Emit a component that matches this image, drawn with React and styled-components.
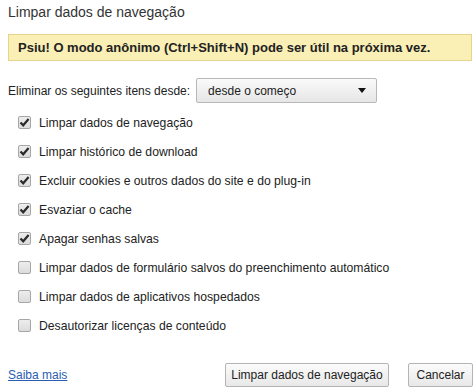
import React from "react";
import { useState } from "react";
import styled, { createGlobalStyle } from "styled-components";

const GlobalStyle = createGlobalStyle`
  body {
    margin: 0;
    background: #ffffff;
    font-family: "Liberation Sans", "DejaVu Sans", sans-serif;
    color: #222;
  }
`;

const items = [
  { label: "Limpar dados de navegação", checked: true },
  { label: "Limpar histórico de download", checked: true },
  { label: "Excluir cookies e outros dados do site e do plug-in", checked: true },
  { label: "Esvaziar o cache", checked: true },
  { label: "Apagar senhas salvas", checked: true },
  { label: "Limpar dados de formulário salvos do preenchimento automático", checked: false },
  { label: "Limpar dados de aplicativos hospedados", checked: false },
  { label: "Desautorizar licenças de conteúdo", checked: false },
];

function App() {
  const [state, setState] = useState(items.map((i) => i.checked));

  const toggle = (idx) => {
    setState(state.map((v, i) => (i === idx ? !v : v)));
  };

  return (
    <Dialog>
      <GlobalStyle />
      <Title>Limpar dados de navegação</Title>
      <Banner>Psiu! O modo anônimo (Ctrl+Shift+N) pode ser útil na próxima vez.</Banner>
      <SelectRow>
        <span>Eliminar os seguintes itens desde:</span>
        <Dropdown>
          <span>desde o começo</span>
          <Arrow />
        </Dropdown>
      </SelectRow>
      <List>
        {items.map((item, i) => (
          <Row key={item.label} onClick={() => toggle(i)}>
            <Box>
              {state[i] && (
                <svg width="11" height="11" viewBox="0 0 11 11">
                  <path d="M1.5 5.5 L4.2 8.3 L9.6 2" fill="none" stroke="#2b2b2b" strokeWidth="2.2" />
                </svg>
              )}
            </Box>
            <span>{item.label}</span>
          </Row>
        ))}
      </List>
      <Footer>
        <Link href="#">Saiba mais</Link>
        <Buttons>
          <Button $width={164}>Limpar dados de navegação</Button>
          <Button $width={65}>Cancelar</Button>
        </Buttons>
      </Footer>
    </Dialog>
  );
}

const Dialog = styled.div`
  width: 475px;
  height: 390px;
  box-sizing: border-box;
  padding: 4px 2px 0 8px;
  display: flex;
  flex-direction: column;
  font-size: 12px;
`;

const Title = styled.div`
  font-size: 14px;
  line-height: 16px;
  color: #333;
`;

const Banner = styled.div`
  margin-top: 14px;
  margin-right: 1px;
  height: 27px;
  box-sizing: border-box;
  background: #faefb5;
  border: 1px solid #e4d48e;
  padding-left: 9px;
  display: flex;
  align-items: center;
  font-weight: bold;
  font-size: 13px;
  color: #222;
`;

const SelectRow = styled.div`
  margin-top: 17px;
  display: flex;
  align-items: center;
  gap: 6px;
  color: #222;
`;

const Dropdown = styled.div`
  width: 181px;
  height: 25px;
  box-sizing: border-box;
  border: 1px solid #b8b8b8;
  border-radius: 2px;
  background: linear-gradient(#fafafa, #e6e6e6);
  display: flex;
  align-items: center;
  justify-content: space-between;
  padding: 0 10px 0 11px;
  color: #222;
`;

const Arrow = styled.span`
  width: 0;
  height: 0;
  border-left: 4px solid transparent;
  border-right: 4px solid transparent;
  border-top: 5px solid #111;
`;

const List = styled.div`
  margin-top: 5px;
  display: flex;
  flex-direction: column;
`;

const Row = styled.label`
  height: 29px;
  display: flex;
  align-items: center;
  gap: 8px;
  padding-left: 10px;
  cursor: default;
  font-size: 12.2px;
  color: #222;
`;

const Box = styled.span`
  width: 13px;
  height: 13px;
  box-sizing: border-box;
  border: 1px solid #a6a6a6;
  border-radius: 2px;
  background: linear-gradient(#ededed, #dcdcdc);
  display: flex;
  align-items: center;
  justify-content: center;
`;

const Footer = styled.div`
  margin-top: auto;
  margin-bottom: 3px;
  display: flex;
  align-items: center;
  justify-content: space-between;
`;

const Link = styled.a`
  color: #2a5db0;
  text-decoration: underline;
`;

const Buttons = styled.div`
  display: flex;
  gap: 19px;
`;

const Button = styled.button`
  width: ${(p) => p.$width}px;
  height: 24px;
  padding: 0;
  border: 1px solid #b4b4b4;
  border-radius: 2px;
  background: linear-gradient(#fbfbfb, #e8e8e8);
  font-family: inherit;
  font-size: 12px;
  color: #222;
`;

export default App;
